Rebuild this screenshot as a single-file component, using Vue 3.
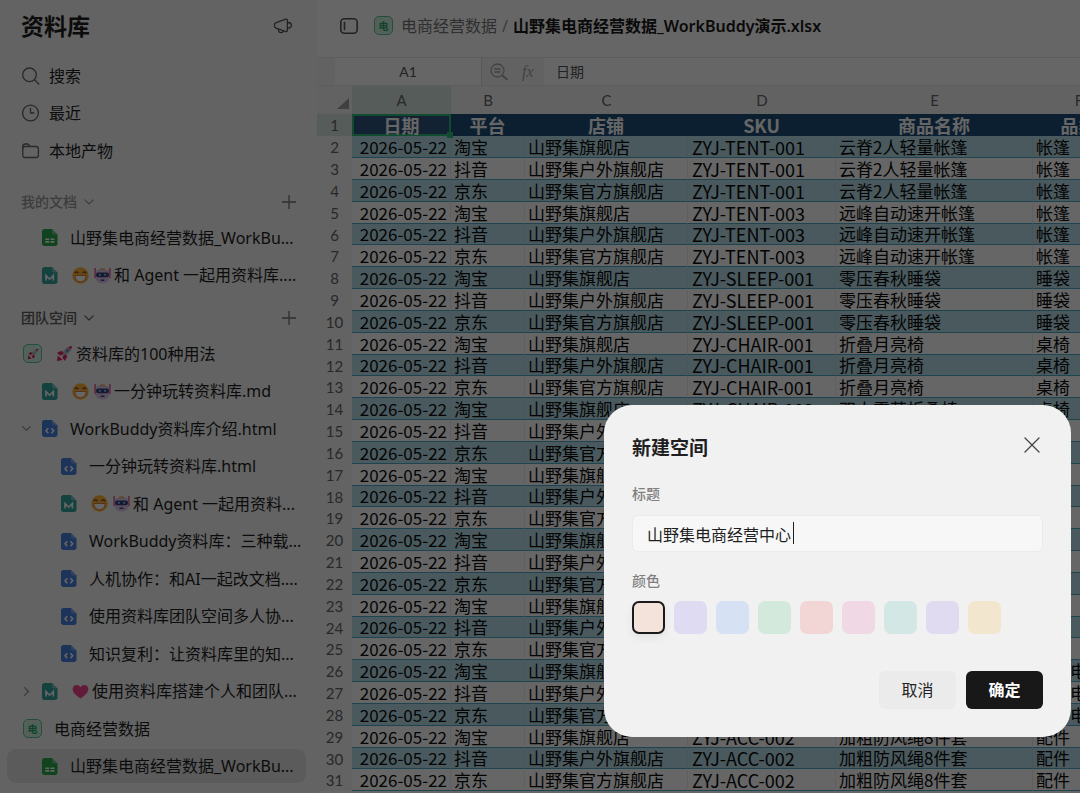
<script setup>
import { ref, computed, onMounted } from 'vue'

const shortcuts = [
  { icon: 'search', label: '搜索' },
  { icon: 'clock', label: '最近' },
  { icon: 'folder', label: '本地产物' },
]

const myDocs = [
  { level: 1, icon: 'sheet', label: '山野集电商经营数据_WorkBu...' },
  { level: 1, icon: 'md', emojis: ['grin', 'robot'], label: '和 Agent 一起用资料库....' },
]

const teamDocs = [
  { level: 0, icon: 'rocketSpace', emojis: ['rocket'], label: '资料库的100种用法' },
  { level: 1, icon: 'md', emojis: ['grin', 'robot'], label: '一分钟玩转资料库.md' },
  { level: 1, icon: 'html', arrow: 'down', label: 'WorkBuddy资料库介绍.html' },
  { level: 2, icon: 'html', label: '一分钟玩转资料库.html' },
  { level: 2, icon: 'md', emojis: ['grin', 'robot'], label: '和 Agent 一起用资料...' },
  { level: 2, icon: 'html', label: 'WorkBuddy资料库：三种载...' },
  { level: 2, icon: 'html', label: '人机协作：和AI一起改文档....' },
  { level: 2, icon: 'html', label: '使用资料库团队空间多人协...' },
  { level: 2, icon: 'html', label: '知识复利：让资料库里的知...' },
  { level: 1, icon: 'md', arrow: 'right', emojis: ['heart'], label: '使用资料库搭建个人和团队...' },
  { level: 0, icon: 'space', label: '电商经营数据' },
  { level: 1, icon: 'sheet', label: '山野集电商经营数据_WorkBu...', active: true },
]

const sections = [
  { title: '我的文档', muted: true, items: myDocs },
  { title: '团队空间', muted: false, items: teamDocs },
]

const columns = ['A', 'B', 'C', 'D', 'E', 'F']
const headings = ['日期', '平台', '店铺', 'SKU', '商品名称', '品类']
const channels = [
  ['淘宝', '山野集旗舰店'],
  ['抖音', '山野集户外旗舰店'],
  ['京东', '山野集官方旗舰店'],
]
const products = [
  ['ZYJ-TENT-001', '云脊2人轻量帐篷', '帐篷'],
  ['ZYJ-TENT-003', '远峰自动速开帐篷', '帐篷'],
  ['ZYJ-SLEEP-001', '零压春秋睡袋', '睡袋'],
  ['ZYJ-CHAIR-001', '折叠月亮椅', '桌椅'],
  ['ZYJ-CHAIR-003', '双人露营折叠椅', '桌椅'],
  ['ZYJ-TABLE-001', '铝合金蛋卷桌', '桌椅'],
  ['ZYJ-LAMP-001', '复古露营灯', '灯具'],
  ['ZYJ-COOK-001', '户外套锅', '炊具'],
  ['ZYJ-POWER-001', '便携储能电源', '户外电源'],
  ['ZYJ-ACC-002', '加粗防风绳8件套', '配件'],
]
const rows = products.flatMap((p) => channels.map((c) => ['2026-05-22', ...c, ...p]))

const title = ref('山野集电商经营中心')
const caret = computed(() => ({ left: `${17 + title.value.length * 16}px` }))
const colors = ['peach', 'violet', 'blue', 'green', 'red', 'pink', 'teal', 'lilac', 'amber']
const color = ref('peach')
const titleInput = ref(null)
onMounted(() => titleInput.value.focus())
</script>

<template>
  <div class="app">
    <aside class="sidebar">
      <header class="side-head">
        <h1>资料库</h1>
        <button class="icon-btn" aria-label="公告">
          <svg width="20" height="18" viewBox="0 0 20 18" class="line">
            <path d="M3.2 5.6 12.6 2.2c.9-.3 1.8.3 1.8 1.2v9.900c0 .9-.9 1.500-1.800 1.200L3.200 11.100C2 10.700 1.500 10 1.500 8.900V7.800c0-1.100.5-1.800 1.700-2.200z" />
            <path d="M14.600 5.500c2.300 0 3.800 1.100 3.800 2.800s-1.500 2.900-3.800 2.900M5.400 12c0 2.300 1.100 3.700 2.700 3.700 1.300 0 2.200-.7 2.600-1.900" />
          </svg>
        </button>
      </header>
      <nav>
        <ul class="list">
          <li v-for="s in shortcuts" :key="s.icon">
            <a href="#" class="shortcut">
              <svg v-if="s.icon === 'search'" width="18" height="18" viewBox="0 0 18 18" class="line">
                <circle cx="7.500" cy="7.800" r="6.800" /><path d="m12.500 12.700 4.300 4.300" />
              </svg>
              <svg v-else-if="s.icon === 'clock'" width="18" height="18" viewBox="0 0 18 18" class="line">
                <circle cx="8.500" cy="9" r="7.900" /><path d="M8.500 4.500V9H12" />
              </svg>
              <svg v-else width="18" height="18" viewBox="0 0 18 18" class="line">
                <path d="M.8 13.200V4.300c0-1.500.9-2.300 2.300-2.300h2.100c.7 0 1.200.3 1.600.8l.9 1.100c.3.400.8.600 1.300.600h5c1.500 0 2.400.9 2.400 2.400v6.300c0 1.500-.9 2.300-2.400 2.300H3.200c-1.500 0-2.400-.8-2.400-2.300z" />
                <path d="M.8 6.600c0-1.300.8-2.100 2.200-2.100h4.800" />
              </svg>
              <span>{{ s.label }}</span>
            </a>
          </li>
        </ul>
      </nav>
      <section v-for="(sec, i) in sections" :key="sec.title" :class="i ? 'sec second' : 'sec'">
        <div class="sec-head" :class="{ muted: sec.muted }">
          <h2>{{ sec.title }}</h2>
          <svg width="10" height="6" viewBox="0 0 10 6" class="line thin"><path d="m.8.8 4.200 4.200L9.200.8" /></svg>
          <button class="icon-btn add" aria-label="新建">
            <svg width="14" height="14" viewBox="0 0 14 14" class="line"><path d="M7 0v14M0 7h14" /></svg>
          </button>
        </div>
        <ul class="list">
          <li v-for="(d, j) in sec.items" :key="j">
            <a href="#" class="doc" :class="['l' + d.level, { active: d.active }]">
              <span v-if="d.level === 1" class="arrow">
                <svg v-if="d.arrow === 'down'" width="9" height="9" viewBox="0 0 9 9" class="line thin"><path d="M.7 2.600 4.500 6.400 8.300 2.600" /></svg>
                <svg v-else-if="d.arrow === 'right'" width="9" height="9" viewBox="0 0 9 9" class="line thin"><path d="M2.600.7 6.400 4.500 2.600 8.300" /></svg>
              </span>
              <span v-if="d.icon === 'space'" class="badge">电</span>
              <span v-else-if="d.icon === 'rocketSpace'" class="badge">
                <svg width="12" height="12" viewBox="0 0 18 18">
                  <path d="M5 9 13 2l4-1-1 4-7 8z" fill="#b9b4c8" /><path d="m2 8 4-2 2 2-3 3zM10 16l2-4-2-2-3 3z" fill="#e0245e" /><path d="m1 17 1-6 5 5z" fill="#e0245e" /><path d="m13 2 4-1-1 4z" fill="#e0245e" />
                </svg>
              </span>
              <svg v-else class="file" :class="'is-' + d.icon" width="16" height="17" viewBox="0 0 16 17">
                <path d="M2.500 0H10l5.500 5.500v9c0 1.500-1 2.500-2.500 2.500H2.500C1 17 0 16 0 14.500v-12C0 1 1 0 2.500 0z" />
                <path class="fold" d="m10 0 5.500 5.500H12c-1.300 0-2-.7-2-2z" />
                <path v-if="d.icon === 'md'" class="mark" d="M4 13.500V8.500l3.700 3.700 3.700-3.700v5" />
                <path v-else-if="d.icon === 'html'" class="mark" d="M6.300 8.300 4 10.800l2.300 2.500M9.400 8.300l2.300 2.500-2.300 2.500" />
                <path v-else class="mark" d="M3.300 10.200h3.900M8.500 10.200h3.900M3.300 12.900h3.900M8.500 12.900h3.900" />
              </svg>
              <span class="label">
                <template v-for="e in d.emojis || []" :key="e">
                  <svg class="emoji" width="17" height="17" viewBox="0 0 18 18">
                    <template v-if="e === 'grin'">
                      <circle cx="9" cy="9" r="8.700" fill="#fdb438" />
                      <path d="M3 6.500c.7-1.700 3-1.700 3.800 0M11.200 6.500c.7-1.700 3-1.700 3.800 0" fill="none" stroke="#6b3a20" stroke-width="1.200" />
                      <path d="M3.200 9h11.600c.3 4-2.300 6.500-5.800 6.500S2.900 13 3.200 9z" fill="#fff" stroke="#d9694a" stroke-width=".9" />
                    </template>
                    <template v-else-if="e === 'robot'">
                      <path d="M1.200 1v11M16.800 1v11" stroke="#e04a86" stroke-width="1.400" />
                      <path d="M5.500 3.500c0-3 7-3 7 0z" fill="#f5a45a" />
                      <path d="M3 3.200h12l1 3.300v5.500c0 3.500-3 5.300-7 5.300s-7-1.800-7-5.300V6.500z" fill="#d9c8ea" />
                      <rect x="2.300" y="5.800" width="13.400" height="5" rx="2" fill="#403c78" />
                      <circle cx="6.200" cy="8.300" r="1.200" fill="#61d8ff" /><circle cx="11.800" cy="8.300" r="1.200" fill="#61d8ff" />
                      <path d="M7 14h4" stroke="#4a3370" stroke-width="1.400" />
                    </template>
                    <template v-else-if="e === 'rocket'">
                      <path d="M5 9 12 2.500l5-1.500-1.500 5L9 13z" fill="#b9b4c8" /><circle cx="12" cy="6" r="1.500" fill="#6687b8" />
                      <path d="m1 8.500 4.500-2.500 2.500 2.500L5 11.500zM9.500 17l2.500-5-2.500-2L6.500 13z" fill="#e0245e" />
                      <path d="m1 17 1-6L7 16z" fill="#e0245e" /><path d="m13 2.200 4-1.200-1.200 4z" fill="#e0245e" />
                    </template>
                    <path v-else d="M9 16.500C3.500 12.500.7 9.800.7 6.300c0-4.600 6-5.900 8.300-1.800 2.300-4.100 8.300-2.800 8.300 1.800 0 3.500-2.800 6.200-8.300 10.200z" fill="#f5458f" />
                  </svg>
                </template>{{ d.label }}</span>
            </a>
          </li>
        </ul>
      </section>
    </aside>

    <main class="main">
      <header class="top">
        <button class="icon-btn toggle" aria-label="收起侧栏">
          <svg width="18" height="16" viewBox="0 0 18 16" class="line bold">
            <rect x=".8" y=".8" width="16.400" height="14.400" rx="3.500" /><path d="M4.500 4.500v7" />
          </svg>
        </button>
        <span class="badge">电</span>
        <a href="#" class="crumb">电商经营数据</a>
        <span class="slash">/</span>
        <strong class="crumb-now">山野集电商经营数据_WorkBuddy演示.xlsx</strong>
      </header>
      <div class="formula">
        <div class="name-box">A1</div>
        <div class="tools">
          <svg width="18" height="18" viewBox="0 0 18 18" class="line">
            <circle cx="7.500" cy="7.500" r="6.500" /><path d="M4.800 6h5.400M4.800 9h5.400" /><path d="m12.500 12.500 4.300 3.800" stroke-width="2" />
          </svg>
          <i class="fx">fx</i>
        </div>
        <div class="value">日期</div>
      </div>
      <div class="grid">
        <table>
          <colgroup>
            <col class="w-num" /><col v-for="c in columns" :key="c" :class="'w-' + c" />
          </colgroup>
          <thead>
            <tr>
              <th class="corner"><svg width="12" height="11" viewBox="0 0 12 11"><path d="M12 0v11H0z" /></svg></th>
              <th v-for="c in columns" :key="c" scope="col" :class="{ picked: c === 'A' }">{{ c }}</th>
            </tr>
          </thead>
          <tbody>
            <tr class="titles">
              <th scope="row" class="picked">1</th>
              <td v-for="(h, i) in headings" :key="h" :class="{ cursor: i === 0 }">{{ h }}</td>
            </tr>
            <tr v-for="(r, i) in rows" :key="i">
              <th scope="row">{{ i + 2 }}</th>
              <td v-for="(v, j) in r" :key="j">{{ v }}</td>
            </tr>
          </tbody>
        </table>
      </div>
    </main>

    <div class="mask">
      <form class="dialog" role="dialog" aria-labelledby="dlg-title" @submit.prevent>
        <div class="dlg-head">
          <h2 id="dlg-title">新建空间</h2>
          <button type="button" class="icon-btn" aria-label="关闭">
            <svg width="16" height="16" viewBox="0 0 16 16" class="line"><path d="m1 1 14 14M15 1 1 15" /></svg>
          </button>
        </div>
        <label for="space-title" class="field">标题</label>
        <div class="text-wrap">
          <input id="space-title" ref="titleInput" v-model="title" type="text" class="text" />
          <span class="caret" :style="caret"></span>
        </div>
        <fieldset>
          <legend class="field">颜色</legend>
          <div class="swatches">
            <input v-for="c in colors" :key="c" v-model="color" type="radio" name="color" :value="c" :aria-label="c" :class="c" />
          </div>
        </fieldset>
        <div class="actions">
          <button type="button" class="btn">取消</button>
          <button type="submit" class="btn primary">确定</button>
        </div>
      </form>
    </div>
  </div>
</template>

<style>
body {
  overflow: hidden;
}
</style>

<style scoped>
* {
  box-sizing: border-box;
}
.app {
  display: flex;
  height: 100vh;
  overflow: hidden;
  background: #fff;
  color: #1f1f1f;
  font: 16px/22px "Noto Sans", "Noto Sans CJK SC", sans-serif;
}
h1, h2, ul, fieldset {
  margin: 0;
  padding: 0;
  border: 0;
}
a {
  color: inherit;
  text-decoration: none;
}
svg {
  flex: none;
  display: block;
}
.line {
  fill: none;
  stroke: currentColor;
  stroke-width: 1.3;
  stroke-linecap: round;
  stroke-linejoin: round;
}
.thin {
  stroke-width: 1.1;
}
.bold {
  stroke-width: 1.6;
}
.icon-btn {
  display: flex;
  padding: 0;
  border: 0;
  background: none;
  color: #555;
}

.sidebar {
  flex: 0 0 317px;
  background: #f7f7f7;
  overflow: hidden;
}
.side-head {
  display: flex;
  align-items: center;
  justify-content: space-between;
  height: 57px;
  padding: 0 24px 6px 21px;
}
h1 {
  font-size: 23px;
  line-height: 32px;
  font-weight: 700;
}
.list {
  list-style: none;
}
.list li {
  display: flex;
  align-items: center;
  height: 37px;
}
.list li:nth-child(2n) {
  height: 38px;
}
.shortcut {
  display: flex;
  align-items: center;
  gap: 9px;
  padding-left: 22px;
}
.shortcut svg {
  color: #666;
}
.sec {
  margin-top: 15px;
}
.second {
  margin-top: 6px;
}
.sec-head {
  display: flex;
  align-items: center;
  gap: 7px;
  height: 35px;
  padding: 0 21px 0 21px;
  color: #5c5c5c;
}
.muted {
  color: #999;
}
.sec-head h2 {
  font-size: 14px;
  line-height: 20px;
  font-weight: 500;
}
.add {
  margin-left: auto;
  color: #777;
}
.doc {
  display: flex;
  align-items: center;
  flex: 1;
  gap: 12px;
  height: 34px;
  min-width: 0;
  margin: 0 11px 0 7px;
  border-radius: 9px;
}
.active {
  background: #e4e4e4;
}
.l0 {
  padding-left: 16px;
}
.l1 {
  padding-left: 15px;
}
.l2 {
  padding-left: 54px;
}
.arrow {
  width: 8px;
  color: #888;
}
.label {
  display: flex;
  align-items: center;
  white-space: pre;
  overflow: hidden;
}
.emoji {
  margin: 0 3px 0 2px;
}
.badge {
  display: flex;
  align-items: center;
  justify-content: center;
  flex: none;
  width: 19px;
  height: 19px;
  border: 1px solid #55c596;
  border-radius: 5px;
  background: #d2f0e1;
  color: #22a968;
  font-size: 10px;
  line-height: 12px;
  font-weight: 700;
}
.fold {
  fill: #fff;
  fill-opacity: 0.3;
}
.mark {
  fill: none;
  stroke: #fff;
  stroke-width: 1.6;
}
.is-md {
  fill: #34a69f;
}
.is-html {
  fill: #477fe0;
}
.is-sheet {
  fill: #2fa84f;
}

.main {
  flex: 1;
  min-width: 0;
  display: flex;
  flex-direction: column;
}
.top {
  display: flex;
  align-items: center;
  flex: none;
  height: 57px;
  padding: 0 23px 6px;
  white-space: nowrap;
}
.toggle {
  margin-right: 16px;
}
.crumb {
  margin-left: 8px;
  color: #777;
}
.slash {
  margin: 0 5px;
  color: #999;
}
.crumb-now {
  font-weight: 600;
  color: #1a1a1a;
}
.formula {
  display: flex;
  flex: none;
  height: 29px;
  padding-left: 18px;
  border: solid #e4e6ea;
  border-width: 1px 0;
  background: #f5f6f8;
  color: #555;
  font-size: 14px;
  line-height: 28px;
}
.name-box {
  width: 147px;
  background: #fff;
  border-right: 1px solid #dcdfe4;
  text-align: center;
  font-family: Lato, sans-serif;
}
.tools {
  display: flex;
  align-items: center;
  gap: 14px;
  width: 62px;
  padding-left: 8px;
  color: #a3a6ac;
}
.fx {
  font-family: "Liberation Serif", serif;
  font-size: 16px;
}
.value {
  flex: 1;
  padding-left: 12px;
  background: #fff;
}
.grid {
  flex: 1;
  min-height: 0;
  overflow: hidden;
}
table {
  table-layout: fixed;
  width: 808px;
  border-spacing: 0;
  color: #0a0a0a;
  font: 17px/20px "Noto Sans CJK SC", sans-serif;
}
.w-num { width: 35px; }
.w-A { width: 99px; }
.w-B { width: 74px; }
.w-C { width: 163px; }
.w-D { width: 148px; }
.w-E { width: 197px; }
.w-F { width: 92px; }
th {
  padding: 0;
  background: #f7f7f8;
  color: #666;
  font: 15px/20px Lato, sans-serif;
}
thead th {
  height: 28px;
  background: #f5f6f8;
}
thead th.picked,
th.picked {
  background: #d7e6e0;
}
thead .corner {
  vertical-align: bottom;
  padding: 0 3px 5px 20px;
}
.corner svg {
  fill: #a0a0a0;
}
tbody tr {
  height: 22px;
}
tbody tr:nth-child(6n) {
  height: 21px;
}
td {
  padding: 0 0 0 3px;
  border-right: 1px solid #eceeef;
  border-bottom: 1px solid #4bacc6;
  white-space: nowrap;
}
td:nth-child(2) {
  padding: 0 3px 0 0;
  text-align: right;
}
td:nth-child(5) {
  padding-left: 4px;
  font-size: 18px;
}
tbody tr:nth-child(2n) td {
  background: #b7dee8;
  border-right-color: #aed6e1;
}
.titles td,
.titles td:nth-child(2) {
  padding: 0;
  border-color: #1f4e79;
  background: #1f4e79;
  color: #fff;
  font-size: 18px;
  font-weight: 700;
  text-align: center;
}
.titles td.cursor {
  position: relative;
  background: #31567f;
  border: 1px solid #2fbf78;
  box-shadow: inset 0 0 0 1px #2fbf78;
  line-height: 19px;
}
.cursor::after {
  content: "";
  position: absolute;
  right: -3px;
  bottom: -3px;
  width: 6px;
  height: 6px;
  background: #2fbf78;
}

.mask {
  position: fixed;
  inset: 0;
  z-index: 2;
  display: flex;
  align-items: flex-end;
  justify-content: flex-end;
  padding: 0 9px 56px;
  background: rgba(0, 0, 0, 0.6);
}
.dialog {
  width: 467px;
  padding: 28px;
  border-radius: 28px;
  background: #f1f1f1;
}
.dlg-head {
  display: flex;
  align-items: center;
  justify-content: space-between;
  height: 30px;
  padding-right: 3px;
}
.dlg-head h2 {
  font-size: 19px;
  line-height: 28px;
  font-weight: 600;
}
.dlg-head .icon-btn {
  padding-bottom: 6px;
  color: #444;
}
.field {
  display: block;
  padding: 0;
  color: #808080;
  font-size: 14px;
  line-height: 20px;
  font-weight: 500;
}
label.field {
  margin-top: 21px;
}
.text-wrap {
  position: relative;
  margin-top: 11px;
}
.text {
  display: block;
  width: 100%;
  height: 37px;
  padding: 0 14px;
  border: 1px solid #ebebeb;
  border-radius: 6px;
  outline: 0;
  background: #f7f7f7;
  color: #1f1f1f;
  caret-color: transparent;
  font: inherit;
}
.caret {
  position: absolute;
  top: 7px;
  width: 1px;
  height: 22px;
  background: #1f1f1f;
}
fieldset {
  margin-top: 19px;
}
.swatches {
  display: flex;
  gap: 9px;
  margin-top: 10px;
}
.swatches input {
  appearance: none;
  width: 33px;
  height: 33px;
  margin: 0;
  border-radius: 7px;
}
.swatches input:checked {
  border: 2px solid #1a1a1a;
  box-shadow: 0 4px 8px rgba(0, 0, 0, 0.06);
}
.peach { background: #f3e3da; }
.violet { background: #dfdbf3; }
.blue { background: #d6e2f4; }
.green { background: #d3e9db; }
.red { background: #f2d6d6; }
.pink { background: #f0d9e4; }
.teal { background: #d3e8e5; }
.lilac { background: #e0dbf1; }
.amber { background: #f3e6cf; }
.actions {
  display: flex;
  justify-content: flex-end;
  gap: 10px;
  margin-top: 37px;
}
.btn {
  width: 77px;
  height: 38px;
  padding: 0;
  border: 0;
  border-radius: 6px;
  background: #ebebeb;
  color: #1f1f1f;
  font: inherit;
}
.primary {
  background: #181818;
  color: #fff;
  font-weight: 600;
}
</style>
